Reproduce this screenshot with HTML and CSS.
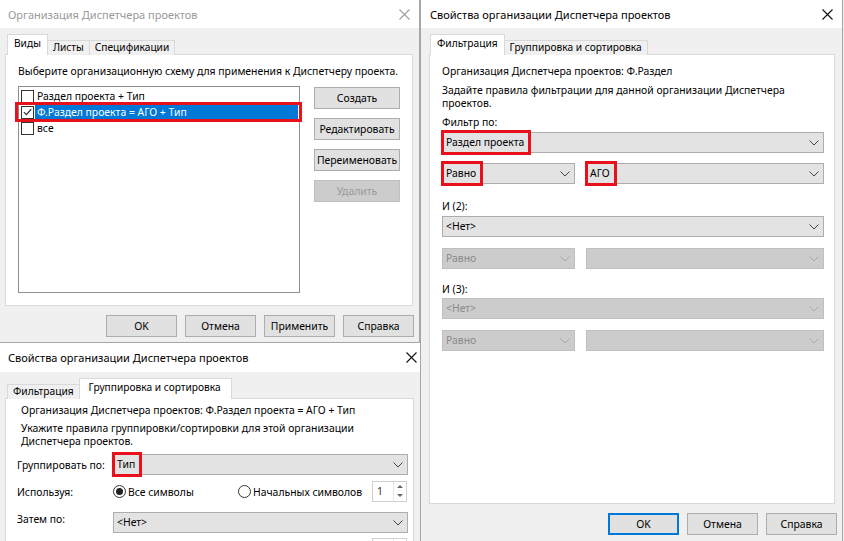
FILE: index.html
```html
<!DOCTYPE html>
<html lang="ru">
<head>
<meta charset="utf-8">
<title>Диспетчер проектов</title>
<link rel="stylesheet" href="styles.css">
</head>
<body>
<div class="desk">

  <!-- Window 1 -->
  <div class="win w1">
    <div class="title inactive">
      <span>Организация Диспетчера проектов</span>
      <svg class="xbtn" width="11" height="11" viewBox="0 0 11 11"><path d="M0.5 0.5 L10.5 10.5 M10.5 0.5 L0.5 10.5" stroke="#a0a0a0" stroke-width="1.1" fill="none"/></svg>
    </div>
    <div class="tabs">
      <div class="tab sel">Виды</div>
      <div class="tab">Листы</div>
      <div class="tab">Спецификации</div>
    </div>
    <div class="panel p1">
      <div class="line">Выберите организационную схему для применения к Диспетчеру проекта.</div>
      <div class="listrow">
        <div class="listbox">
          <div class="item"><span class="cb"></span><span class="lbl">Раздел проекта + Тип</span></div>
          <div class="item sel mark"><span class="cb"><svg width="12" height="12" viewBox="0 0 12 12"><path d="M2 6.2 L4.8 9 L10 3" stroke="#333" stroke-width="1.3" fill="none"/></svg></span><span class="lbl">Ф.Раздел проекта = АГО + Тип</span></div>
          <div class="item"><span class="cb"></span><span class="lbl">все</span></div>
        </div>
        <div class="sidebtns">
          <div class="btn">Создать</div>
          <div class="btn">Редактировать</div>
          <div class="btn">Переименовать</div>
          <div class="btn dis">Удалить</div>
        </div>
      </div>
    </div>
    <div class="btnrow">
      <div class="btn bb">OK</div>
      <div class="btn bb">Отмена</div>
      <div class="btn bb">Применить</div>
      <div class="btn bb">Справка</div>
    </div>
  </div>

  <!-- Window 2 -->
  <div class="win w2">
    <div class="title">
      <span>Свойства организации Диспетчера проектов</span>
      <svg class="xbtn" width="11" height="11" viewBox="0 0 11 11"><path d="M0.5 0.5 L10.5 10.5 M10.5 0.5 L0.5 10.5" stroke="#111" stroke-width="1.1" fill="none"/></svg>
    </div>
    <div class="tabs">
      <div class="tab sel">Фильтрация</div>
      <div class="tab">Группировка и сортировка</div>
    </div>
    <div class="panel p2">
      <div class="line">Организация Диспетчера проектов: Ф.Раздел</div>
      <div class="para m6">Задайте правила фильтрации для данной организации Диспетчера<br>проектов.</div>
      <div class="line m5">Фильтр по:</div>
      <div class="combo m3"><span class="val hl">Раздел проекта</span><svg class="chev" width="10" height="6" viewBox="0 0 10 6"><path d="M0.5 0.5 L5 5 L9.5 0.5" stroke="#444" fill="none"/></svg></div>
      <div class="crow m10">
        <div class="combo short"><span class="val hl">Равно</span><svg class="chev" width="10" height="6" viewBox="0 0 10 6"><path d="M0.5 0.5 L5 5 L9.5 0.5" stroke="#444" fill="none"/></svg></div>
        <div class="combo grow"><span class="val hl">АГО</span><svg class="chev" width="10" height="6" viewBox="0 0 10 6"><path d="M0.5 0.5 L5 5 L9.5 0.5" stroke="#444" fill="none"/></svg></div>
      </div>
      <div class="line m15">И (2):</div>
      <div class="combo m3"><span class="val">&lt;Нет&gt;</span><svg class="chev" width="10" height="6" viewBox="0 0 10 6"><path d="M0.5 0.5 L5 5 L9.5 0.5" stroke="#444" fill="none"/></svg></div>
      <div class="crow m11">
        <div class="combo short off"><span class="val">Равно</span><svg class="chev" width="10" height="6" viewBox="0 0 10 6"><path d="M0.5 0.5 L5 5 L9.5 0.5" stroke="#a8a8a8" fill="none"/></svg></div>
        <div class="combo grow off"><span class="val"></span><svg class="chev" width="10" height="6" viewBox="0 0 10 6"><path d="M0.5 0.5 L5 5 L9.5 0.5" stroke="#a8a8a8" fill="none"/></svg></div>
      </div>
      <div class="line m13">И (3):</div>
      <div class="combo m2 off"><span class="val">&lt;Нет&gt;</span><svg class="chev" width="10" height="6" viewBox="0 0 10 6"><path d="M0.5 0.5 L5 5 L9.5 0.5" stroke="#a8a8a8" fill="none"/></svg></div>
      <div class="crow m11">
        <div class="combo short off"><span class="val">Равно</span><svg class="chev" width="10" height="6" viewBox="0 0 10 6"><path d="M0.5 0.5 L5 5 L9.5 0.5" stroke="#a8a8a8" fill="none"/></svg></div>
        <div class="combo grow off"><span class="val"></span><svg class="chev" width="10" height="6" viewBox="0 0 10 6"><path d="M0.5 0.5 L5 5 L9.5 0.5" stroke="#a8a8a8" fill="none"/></svg></div>
      </div>
    </div>
    <div class="btnrow">
      <div class="btn bb def">OK</div>
      <div class="btn bb">Отмена</div>
      <div class="btn bb">Справка</div>
    </div>
  </div>

  <!-- Window 3 -->
  <div class="win w3">
    <div class="title">
      <span>Свойства организации Диспетчера проектов</span>
      <svg class="xbtn" width="11" height="11" viewBox="0 0 11 11"><path d="M0.5 0.5 L10.5 10.5 M10.5 0.5 L0.5 10.5" stroke="#111" stroke-width="1.1" fill="none"/></svg>
    </div>
    <div class="tabs t3">
      <div class="tab">Фильтрация</div>
      <div class="tab sel wide">Группировка и сортировка</div>
    </div>
    <div class="panel p3">
      <div class="line ind">Организация Диспетчера проектов: Ф.Раздел проекта = АГО + Тип</div>
      <div class="para ind m5">Укажите правила группировки/сортировки для этой организации<br>Диспетчера проектов.</div>
      <div class="frow m6">
        <div class="flabel">Группировать по:</div>
        <div class="combo grow"><span class="val hl">Тип</span><svg class="chev" width="10" height="6" viewBox="0 0 10 6"><path d="M0.5 0.5 L5 5 L9.5 0.5" stroke="#444" fill="none"/></svg></div>
      </div>
      <div class="frow m6">
        <div class="flabel">Используя:</div>
        <div class="radio r1"><span class="rc on"></span><span>Все символы</span></div>
        <div class="radio r2"><span class="rc"></span><span>Начальных символов</span></div>
        <div class="spin"><span class="sv">1</span><span class="sb"><i class="up"></i><i class="dn"></i></span></div>
      </div>
      <div class="frow m10 top">
        <div class="flabel">Затем по:</div>
        <div class="combo grow"><span class="val">&lt;Нет&gt;</span><svg class="chev" width="10" height="6" viewBox="0 0 10 6"><path d="M0.5 0.5 L5 5 L9.5 0.5" stroke="#444" fill="none"/></svg></div>
      </div>
      <div class="frow m5">
        <div class="flabel"></div>
        <div class="radio r1"><span class="rc on"></span></div>
        <div class="radio r2"><span class="rc"></span></div>
        <div class="spin"><span class="sb"><i class="up"></i><i class="dn"></i></span></div>
      </div>
    </div>
  </div>

</div>
</body>
</html>
```

FILE: styles.css
```css
* { box-sizing: border-box; }
html, body { margin: 0; padding: 0; }
body {
  width: 844px; height: 541px; overflow: hidden;
  background: #f0f0f0;
  font-family: "Noto Sans", "Open Sans", sans-serif;
  font-size: 10.4px; color: #000;
}
.desk { position: relative; width: 844px; height: 541px; overflow: hidden; }

.win { position: absolute; background: #f0f0f0; display: flex; flex-direction: column; }
.w1 { left: 0; top: 0; width: 420px; height: 343px; border-right: 1px solid #a6a6a6; border-bottom: 1px solid #a6a6a6; z-index: 1; }
.w2 { left: 420px; top: 0; width: 423px; height: 541px; border-left: 1px solid #a6a6a6; border-right: 1px solid #a6a6a6; z-index: 2; }
.w3 { left: 0; top: 342px; width: 421px; height: 210px; border-top: 1px solid #a6a6a6; border-right: 1px solid #a6a6a6; z-index: 3; }

.title {
  height: 28px; flex: none; background: #fff;
  display: flex; align-items: center; justify-content: space-between;
  padding: 0 9px 0 8px;
  font-size: 11px; color: #000;
}
.title.inactive { color: #9a9a9a; }
.w2 .title { padding-left: 9px; }
.w3 .title { height: 29px; padding-right: 3px; }
.xbtn { display: block; }

.tabs { display: flex; align-items: flex-end; height: 20px; margin-top: 7px; padding-left: 7px; flex: none; position: relative; z-index: 2; margin-bottom: -1px; }
.w2 .tabs { padding-left: 9px; }
.t3 { margin-top: 7px; }
.tab {
  height: 15px; padding: 0 5px; margin-right: -1px;
  border: 1px solid #d9d9d9; border-bottom: none; background: #f0f0f0;
  line-height: 13px; white-space: nowrap; font-size: 10.2px;
}
.tab.sel { height: 21px; background: #fff; line-height: 17px; position: relative; z-index: 2; padding: 0 6px; }
.tab.sel.wide { padding: 0 10px 0 9px; }

.panel { background: #fff; border: 1px solid #d9d9d9; flex: none; }
.p1 { margin: 0 6px 0 5px; height: 252px; padding: 9px 12px 0 12px; }
.p2 { margin: 0 7px 0 8px; height: 450px; padding: 9px 10px 0 12px; }
.p3 { margin: 0 6px 0 5px; height: 200px; padding: 4px 5px 0 11px; }

.line { height: 14px; line-height: 14px; white-space: nowrap; }
.para { line-height: 13px; white-space: nowrap; }
.ind { padding-left: 4px; }
.m2 { margin-top: 2px; } .m3 { margin-top: 3px; } .m5 { margin-top: 5px; } .m6 { margin-top: 6px; }
.m10 { margin-top: 10px; } .m11 { margin-top: 11px; } .m13 { margin-top: 13px; } .m15 { margin-top: 15px; }

.listrow { display: flex; margin-top: 8px; }
.listbox { width: 282px; height: 207px; border: 1px solid #8e8e8e; background: #fff; padding-top: 1px; }
.item { height: 16px; display: flex; align-items: center; position: relative; }
.cb { width: 13px; height: 13px; border: 1px solid #333; background: #fff; margin-left: 2px; flex: none; display: flex; align-items: center; justify-content: center; }
.cb svg { display: block; }
.lbl { height: 16px; line-height: 16px; padding-left: 2px; margin-left: 1px; white-space: nowrap; flex: 1; }
.item.sel .lbl { background: #0078d7; color: #fff; margin-right: 1px; }
.mark::after { content: ""; position: absolute; left: -4px; right: -3px; top: -2px; bottom: -2px; border: 3px solid #e8101a; }

.sidebtns { display: flex; flex-direction: column; gap: 9px; margin-left: 14px; padding-top: 1px; }
.sidebtns .btn { width: 86px; }
.btn {
  height: 22px; background: #e1e1e1; border: 1px solid #adadad;
  display: flex; align-items: center; justify-content: center;
  white-space: nowrap;
}
.btn.dis { background: #cccccc; border-color: #bfbfbf; color: #9a9a9a; }
.btn.def { border: 2px solid #0078d7; }
.btnrow { display: flex; justify-content: flex-end; gap: 8px; margin-top: 9px; padding-right: 5px; flex: none; }
.bb { width: 71px; }

.combo {
  height: 21px; background: #e3e3e3; border: 1px solid #adadad;
  display: flex; align-items: center; justify-content: space-between;
  position: relative; padding-right: 4px;
}
.combo.off { background: #cccccc; border-color: #bfbfbf; color: #8a8a8a; }
.val { padding-left: 3px; white-space: nowrap; line-height: 19px; align-self: stretch; }
.val.hl { margin: -3px 0 -3px -2px; padding: 0 4px 0 2px; border: 3px solid #e8101a; line-height: 19px; }
.chev { display: block; flex: none; }
.crow { display: flex; gap: 11px; }
.short { width: 133px; flex: none; }
.grow { flex: 1; }

.frow { display: flex; align-items: center; }
.frow.top { align-items: flex-start; }
.flabel { width: 96px; flex: none; line-height: 14px; white-space: nowrap; }
.radio { display: flex; align-items: center; white-space: nowrap; }
.r1 { width: 125px; }
.r2 { width: 134px; }
.rc { width: 13px; height: 13px; border: 1px solid #333; border-radius: 50%; background: #fff; margin-right: 2px; position: relative; flex: none; }
.rc.on::after { content: ""; position: absolute; left: 2px; top: 2px; width: 7px; height: 7px; border-radius: 50%; background: #222; }
.spin { width: 35px; height: 21px; border: 1px solid #cfcfcf; background: #fff; display: flex; justify-content: space-between; }
.sv { padding-left: 4px; line-height: 19px; color: #333; }
.sb { width: 13px; margin-left: auto; display: flex; flex-direction: column; border-left: 1px solid #e6e6e6; }
.sb i { flex: 1; position: relative; }
.sb i::after { content: ""; position: absolute; left: 3px; width: 0; height: 0; border-left: 3px solid transparent; border-right: 3px solid transparent; }
.sb .up::after { top: 3px; border-bottom: 3px solid #666; }
.sb .dn::after { top: 2px; border-top: 3px solid #666; }
```
